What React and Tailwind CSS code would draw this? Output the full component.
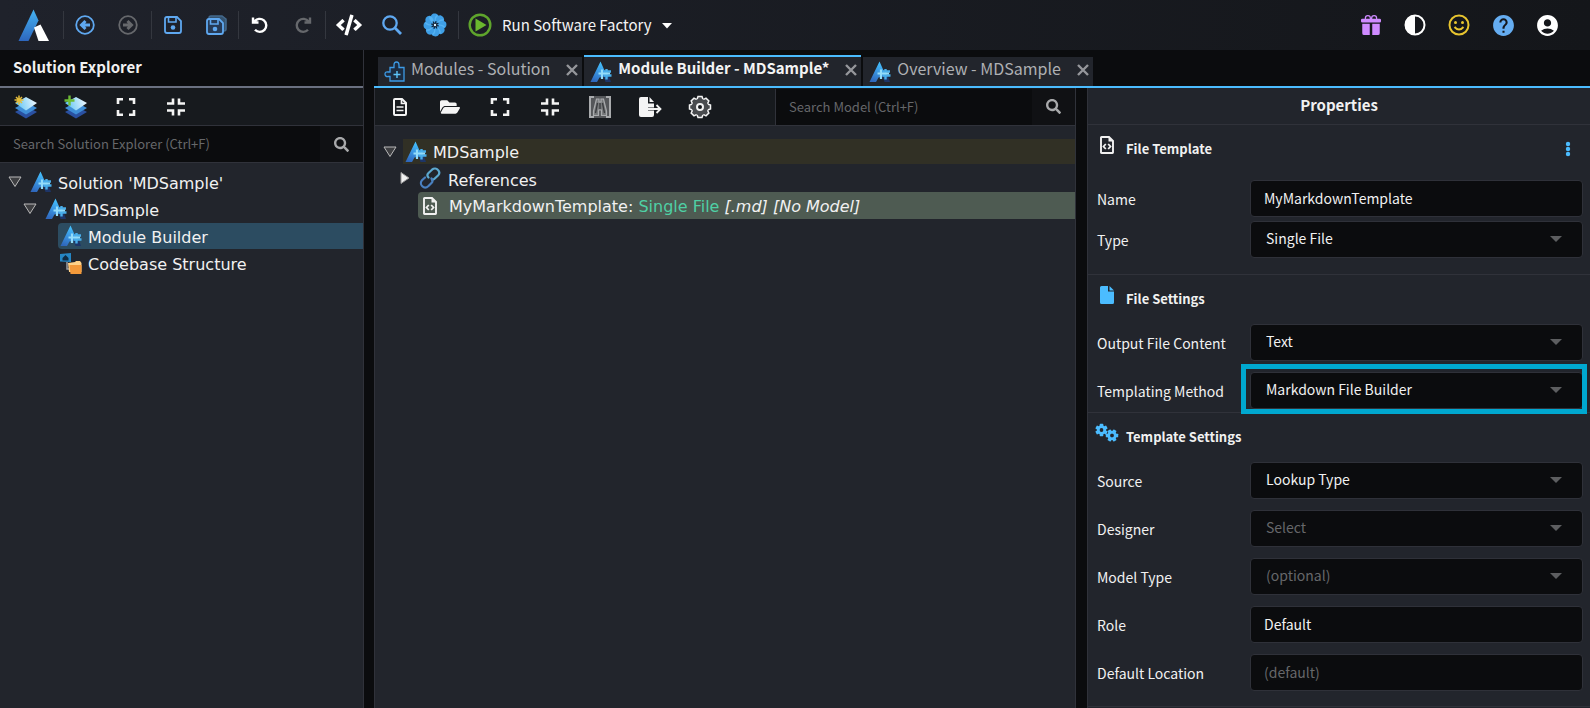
import { useId, useState } from "react";
import { BsGiftFill } from "react-icons/bs";
import { FaCode, FaFolderOpen, FaSearch } from "react-icons/fa";
import { MdAccountCircle, MdHelp } from "react-icons/md";

const LogoIcon = () => (
  <svg width="32" height="33" viewBox="0 0 32 33">
    <defs>
      <linearGradient id="logo" x1="0" y1="0" x2="0" y2="1">
        <stop offset="0" stopColor="#45b4f3" />
        <stop offset="1" stopColor="#2d66bd" />
      </linearGradient>
    </defs>
    <path d="M15.500 0.500L20.500 11.500L10.500 32H0.500Z" fill="url(#logo)" />
    <path d="M16 18.500L22.500 15.500L31 32H20.500Z" fill="#fff" />
  </svg>
);

const CircleArrowIcon = ({ flip, className }) => (
  <svg
    width="20"
    height="20"
    viewBox="0 0 20 20"
    fill="none"
    stroke="currentColor"
    className={className}
  >
    <circle cx="10" cy="10" r="8.800" strokeWidth="1.800" />
    <path
      d={flip ? "M5 10H13M9.500 6L13.500 10L9.500 14" : "M15 10H7M10.500 6L6.500 10L10.500 14"}
      strokeWidth="3"
    />
  </svg>
);

const SaveIcon = () => (
  <svg width="18" height="18" viewBox="0 0 18 18" fill="none" stroke="#5fa8f0">
    <path
      d="M3 1H13L17 5V15Q17 17 15 17H3Q1 17 1 15V3Q1 1 3 1Z"
      strokeWidth="1.800"
    />
    <path d="M4.500 1V6H12V1" strokeWidth="1.600" />
    <circle cx="9" cy="11.500" r="2.300" fill="#5fa8f0" stroke="none" />
  </svg>
);

const SaveAllIcon = () => (
  <svg width="21" height="20" viewBox="0 0 21 20" fill="none" stroke="#5fa8f0">
    <path
      d="M5 1H16L20 4V14Q20 16 18 16H5Q3 16 3 14V3Q3 1 5 1Z"
      fill="#35536f"
      stroke="#43698d"
      strokeWidth="1.500"
    />
    <path
      d="M3 4H13L17 8V17Q17 19 15 19H3Q1 19 1 17V6Q1 4 3 4Z"
      fill="#263a55"
      strokeWidth="1.800"
    />
    <path d="M4.500 4V9H12V4" strokeWidth="1.600" />
    <circle cx="9" cy="14" r="2.300" fill="#5fa8f0" stroke="none" />
  </svg>
);

const UndoIcon = ({ flip, className }) => (
  <svg
    width="18"
    height="18"
    viewBox="0 0 18 18"
    fill="none"
    stroke="currentColor"
    strokeWidth="2.400"
    className={className}
  >
    {flip ? (
      <path d="M14.500 5.500A6.500 6.500 0 1 0 14 13.800M16 1.500V6.500H10.500" />
    ) : (
      <path d="M3.500 5.500A6.500 6.500 0 1 1 4 13.800M2 1.500V6.500H7.500" />
    )}
  </svg>
);

const MagnifierIcon = () => (
  <svg width="20" height="20" viewBox="0 0 20 20" fill="none" stroke="#5fa8f0">
    <circle cx="8" cy="8" r="6.700" strokeWidth="2.300" />
    <path d="M12.800 12.800L19 19" strokeWidth="2.800" />
  </svg>
);

const FlowerIcon = () => (
  <svg width="24" height="24" viewBox="-12 -12 24 24">
    {[0, 45, 90, 135, 180, 225, 270, 315].map((angle) => (
      <g key={angle} transform={`rotate(${angle})`}>
        <path
          d="M0 -2C-5 -4 -5.500 -9 -2.500 -11C1 -12.500 5 -10 4 -5Z"
          fill="#3f9fe6"
        />
        <path d="M0 -2C-1 -6 0 -9 2 -10C4.500 -8 3.500 -5 0 -2Z" fill="#56b3f2" />
      </g>
    ))}
    {[0, 45, 90, 135].map((angle) => (
      <path
        key={angle}
        d="M0 -4V4"
        stroke="#132338"
        strokeWidth="1.200"
        transform={`rotate(${angle + 15})`}
      />
    ))}
    <circle r="1.200" fill="#d8f0ff" />
  </svg>
);

const PlayIcon = () => (
  <svg width="24" height="24" viewBox="0 0 24 24">
    <circle cx="12" cy="12" r="10.300" fill="none" stroke="#5fa52c" strokeWidth="2.400" />
    <path d="M7.500 5.500L18.500 12L7.500 18.500Z" fill="#6ab82e" />
  </svg>
);

const ContrastIcon = () => (
  <svg width="22" height="22" viewBox="0 0 22 22">
    <circle cx="11" cy="11" r="9.500" fill="none" stroke="#fff" strokeWidth="2" />
    <path d="M11 1A10 10 0 0 0 11 21Z" fill="#fff" />
  </svg>
);

const SmileIcon = () => (
  <svg width="22" height="22" viewBox="0 0 22 22" fill="none" stroke="#e8c52f">
    <circle cx="11" cy="11" r="9.500" strokeWidth="2" />
    <path d="M6.500 13Q11 18 15.500 13" strokeWidth="2" />
    <circle cx="7.500" cy="8.500" r="1.500" fill="#e8c52f" stroke="none" />
    <circle cx="14.500" cy="8.500" r="1.500" fill="#e8c52f" stroke="none" />
  </svg>
);

const LayersIcon = ({ badge }) => {
  const id = useId();

  return (
    <svg width="24" height="24" viewBox="0 0 24 24" className="shrink-0">
      <defs>
        <linearGradient id={id} x1="0" y1="0.500" x2="1" y2="0.300">
          <stop offset="0" stopColor="#5cc3f5" />
          <stop offset="1" stopColor="#f2faff" />
        </linearGradient>
      </defs>
      <path d="M1 17L12 11L23 17L12 23.500Z" fill="#2a50a0" />
      <path d="M1 13L12 7L23 13L12 19.500Z" fill="#3f8fd8" />
      <path d="M1 8L12 2L23 8L12 15.500Z" fill={`url(#${id})`} />
      {badge === "new" ? (
        <path
          d="M5 0.500V9.500M0.500 5H9.500M2 2L8 8M8 2L2 8"
          stroke="#e5bd3a"
          strokeWidth="1.500"
        />
      ) : (
        <path d="M5.500 0.500V10.500M0.500 5.500H10.500" stroke="#6dbb35" strokeWidth="2.400" />
      )}
    </svg>
  );
};

const ExpandIcon = () => (
  <svg width="20" height="20" viewBox="0 0 20 20" fill="none" stroke="#f4f4f4" strokeWidth="2.600">
    <path d="M2 7V2.300H7M13 2.300H18V7M18 13V17.700H13M7 17.700H2V13" />
  </svg>
);

const CollapseIcon = () => (
  <svg width="20" height="20" viewBox="0 0 20 20" fill="none" stroke="#f4f4f4" strokeWidth="2.600">
    <path d="M1 6.500H7V1.500M13 1.500V6.500H19M19 13.500H13V18.500M7 18.500V13.500H1" />
  </svg>
);

const FileTextIcon = () => (
  <svg width="16" height="20" viewBox="0 0 16 20" fill="none" stroke="#f4f4f4">
    <path
      d="M3 2H10L14 6V17Q14 18 13 18H3Q2 18 2 17V3Q2 2 3 2Z"
      strokeWidth="2"
    />
    <path d="M9.500 2V6.500H14M4.500 10H11.500M4.500 13.500H11.500" strokeWidth="1.700" />
  </svg>
);

const BinocularsIcon = () => (
  <svg width="24" height="24" viewBox="0 0 24 24" className="shrink-0">
    <rect x="1" y="1" width="22" height="22" fill="#55575a" />
    <path
      d="M6 2H2V22H6M18 2H22V22H18"
      stroke="#a9abad"
      strokeWidth="2"
      fill="none"
    />
    <path
      d="M8.500 4H11V7H13V4H15.500L18.500 16V20.500H13.500V15H10.500V20.500H5.500V16Z"
      stroke="#a9abad"
      strokeWidth="1.200"
      fill="#77797b"
    />
    <path d="M9.500 8L7.500 18M14.500 8L16.500 18M12 8V14" stroke="#3a3c3f" strokeWidth="1.300" />
  </svg>
);

const ExportIcon = () => (
  <svg width="26" height="22" viewBox="0 0 26 22" className="shrink-0">
    <path
      d="M4 1H11V7.500H17V11.500H11V14.500H17V19Q17 21 15 21H4Q2 21 2 19V3Q2 1 4 1Z"
      fill="#f4f4f4"
    />
    <path d="M12.500 1L17 6H12.500Z" fill="#f4f4f4" />
    <path d="M11 13H23M19.500 9L23.500 13L19.500 17" fill="none" stroke="#f4f4f4" strokeWidth="1.800" />
  </svg>
);

const GearIcon = () => (
  <svg width="24" height="24" viewBox="-12 -12 24 24" className="shrink-0">
    {[0, 45, 90, 135, 180, 225, 270, 315].map((angle) => (
      <path
        key={angle}
        d="M-3 -7.500L-2 -10.500H2L3 -7.500"
        fill="#4a4c4f"
        stroke="#f4f4f4"
        strokeWidth="1.500"
        transform={`rotate(${angle})`}
      />
    ))}
    <circle r="8" fill="#4a4c4f" />
    <circle r="3" fill="#16191c" stroke="#f4f4f4" strokeWidth="2" />
  </svg>
);

const PuzzleIcon = () => (
  <svg width="21" height="21" viewBox="0 0 21 21" fill="none" stroke="#3d9be6">
    <path
      d="M6 20V15.500H4.500Q1 16 1 13Q1 10.500 4 11H6V6.500H10V4Q10 1 12.500 1Q15 1 15 4V6.500H20V20Z"
      strokeWidth="1.300"
      fill="#1c2c41"
    />
    <path d="M13 10V17M9.500 13.500H16.500" stroke="#5cc4fa" strokeWidth="1.400" />
  </svg>
);

const ModuleIcon = () => {
  const id = useId();

  return (
    <svg width="22" height="22" viewBox="0 0 22 22" className="shrink-0">
      <defs>
        <linearGradient id={id} x1="0.600" y1="0" x2="0.300" y2="1">
          <stop offset="0" stopColor="#45c4ff" />
          <stop offset="0.500" stopColor="#3a96e2" />
          <stop offset="1" stopColor="#2f67bc" />
        </linearGradient>
      </defs>
      <path d="M13 14H18.500L21 21H15.500Z" fill="#1d3568" />
      <path d="M10.500 0.500L17 15L9.500 16.500L7 21H0.500Z" fill={`url(#${id})`} />
      <path
        d="M16.500 8V18.500M14 10.500H21M14 14.500H21.500"
        fill="none"
        stroke="#49aeea"
        strokeWidth="2.400"
      />
      <path
        d="M12 8.500V18M8.500 12.500H20"
        fill="none"
        stroke="#93dcfa"
        strokeWidth="2.200"
      />
    </svg>
  );
};

const CodebaseIcon = () => (
  <svg width="23" height="23" viewBox="0 0 23 23" className="shrink-0">
    <path d="M1 2L12 1V10L1 9.500Z" fill="#2586c4" />
    <path d="M3.500 6L6.500 3L9.500 6V8.500H3.500Z" fill="#102b42" />
    <path d="M8 10V17H11" stroke="#9a9da3" strokeWidth="1.500" fill="none" />
    <path d="M9 11L16 10L17 9H21L22.500 11V20H10Z" fill="#ffd188" />
    <path d="M10.500 13H22.500V21.500Q22.500 22 22 22H11.500Z" fill="#f3993a" />
  </svg>
);

const LinkIcon = () => (
  <svg
    width="22"
    height="22"
    viewBox="0 0 22 22"
    fill="none"
    strokeWidth="2.200"
    strokeLinecap="round"
    className="shrink-0"
  >
    <path
      d="M9.500 10.500C7.500 8.500 8.500 7 9.500 6L13 2.700C15 1 17.500 1.300 19 3C20.700 4.800 20.500 7 19 8.500L15.500 11.800C14.800 12.500 14 12.700 13 12.700"
      stroke="#5ca8cf"
    />
    <path
      d="M12.500 11.500C14 13.500 13.500 15 12.500 16L9.500 19C7.500 20.800 5 20.800 3.300 19.200C1.500 17.500 1.500 15 3 13.300L6 10.500"
      stroke="#4a80c0"
    />
  </svg>
);

const CodeFileIcon = () => (
  <svg width="16" height="20" viewBox="0 0 16 20" className="shrink-0">
    <path
      d="M2.500 2H10L14 6V17.500Q14 18 13.500 18H2.500Q2 18 2 17.500V2.500Q2 2 2.500 2Z"
      fill="none"
      stroke="#f1f1f1"
      strokeWidth="1.900"
    />
    <path d="M9.500 2V6.500H14Z" fill="#f1f1f1" />
    <path
      d="M6.800 9L4.500 11.500L6.800 14M9.200 9L11.500 11.500L9.200 14"
      fill="none"
      stroke="#f1f1f1"
      strokeWidth="1.800"
    />
  </svg>
);

const FileIcon = () => (
  <svg width="16" height="20" viewBox="0 0 16 20">
    <path
      d="M2.500 1H9V6.500H15V17.500Q15 19 13.500 19H2.500Q1 19 1 17.500V2.500Q1 1 2.500 1Z"
      fill="#4bbcff"
    />
    <path d="M10.500 1L15 5.500H10.500Z" fill="#4bbcff" />
  </svg>
);

const gearTeeth = [0, 60, 120, 180, 240, 300];

const CogsIcon = () => (
  <svg width="24" height="20" viewBox="0 0 24 20">
    <g transform="translate(6.500 7)">
      {gearTeeth.map((angle) => (
        <rect
          key={angle}
          x="-1.800"
          y="-6.200"
          width="3.600"
          height="4"
          rx="0.600"
          fill="#4bbcff"
          transform={`rotate(${angle})`}
        />
      ))}
      <circle r="3.300" fill="none" stroke="#4bbcff" strokeWidth="2.800" />
    </g>
    <g transform="translate(17 12.500)">
      {gearTeeth.map((angle) => (
        <rect
          key={angle}
          x="-1.800"
          y="-6.200"
          width="3.600"
          height="4"
          rx="0.600"
          fill="#4bbcff"
          transform={`rotate(${angle + 30})`}
        />
      ))}
      <circle r="3.300" fill="none" stroke="#4bbcff" strokeWidth="2.800" />
    </g>
  </svg>
);

const OpenArrow = () => (
  <svg width="14" height="12" viewBox="0 0 14 12" className="shrink-0">
    <path d="M1 1H13L7 10.500Z" fill="#3e3f42" stroke="#b9b9b9" />
  </svg>
);

const ClosedArrow = () => (
  <svg width="10" height="14" viewBox="0 0 10 14" className="shrink-0">
    <path d="M1 1.500L9 7L1 12.500Z" fill="#f1f1f1" stroke="#9a9a9a" />
  </svg>
);

const CloseIcon = () => (
  <svg width="12" height="12" viewBox="0 0 12 12" stroke="#95979b" strokeWidth="2.400">
    <path d="M1 1L11 11M11 1L1 11" />
  </svg>
);

const Divider = () => <div className="h-7 w-px bg-[#34373f]" />;

const IconButton = ({ label, className = "w-[22px]", children }) => (
  <button
    type="button"
    aria-label={label}
    className={`flex h-6 shrink-0 items-center justify-center ${className}`}
  >
    {children}
  </button>
);

const Header = () => (
  <header className="flex h-[50px] items-center justify-between bg-linear-to-r from-[#1f222b] to-[#14161a] pr-8 pl-[18px]">
    <div className="flex items-center">
      <LogoIcon />
      <div className="ml-[13px] flex items-center gap-[10px]">
        <Divider />
        <div className="flex gap-[21px] pr-[2px]">
          <IconButton label="Back">
            <CircleArrowIcon className="text-[#5fa8f0]" />
          </IconButton>
          <IconButton label="Forward">
            <CircleArrowIcon flip className="text-[#66686c]" />
          </IconButton>
        </div>
        <Divider />
        <div className="flex gap-[21px] pr-px">
          <IconButton label="Save">
            <SaveIcon />
          </IconButton>
          <IconButton label="Save all">
            <SaveAllIcon />
          </IconButton>
        </div>
        <Divider />
        <div className="flex gap-[21px] pr-px">
          <IconButton label="Undo">
            <UndoIcon className="text-white" />
          </IconButton>
          <IconButton label="Redo">
            <UndoIcon flip className="text-[#66686c]" />
          </IconButton>
        </div>
        <Divider />
        <div className="flex gap-[17px]">
          <IconButton label="Code" className="w-[26px]">
            <FaCode size={26} className="text-white" />
          </IconButton>
          <IconButton label="Search" className="w-[26px]">
            <MagnifierIcon />
          </IconButton>
          <IconButton label="Assistant" className="w-[26px]">
            <FlowerIcon />
          </IconButton>
        </div>
        <Divider />
      </div>
      <button
        type="button"
        className="ml-[9px] flex items-center gap-[10px] text-[15px] leading-6 text-[#f4f4f4]"
      >
        <PlayIcon />
        Run Software Factory
        <svg width="10" height="6" viewBox="0 0 10 6" className="mt-0.5">
          <path d="M0 0H10L5 5.500Z" fill="#fff" />
        </svg>
      </button>
    </div>
    <div className="flex items-center gap-[22px]">
      <IconButton label="What's new">
        <BsGiftFill size={20} className="text-[#cf8bff]" />
      </IconButton>
      <IconButton label="Theme">
        <ContrastIcon />
      </IconButton>
      <IconButton label="Feedback">
        <SmileIcon />
      </IconButton>
      <IconButton label="Help">
        <MdHelp size={25} className="shrink-0 text-[#65adf1]" />
      </IconButton>
      <IconButton label="Account">
        <MdAccountCircle size={25} className="shrink-0 text-white" />
      </IconButton>
    </div>
  </header>
);

const SearchBox = ({ id, placeholder }) => (
  <div className="flex h-9 min-w-0 flex-1 bg-[#0b0c0e]">
    <input
      id={id}
      type="search"
      aria-label={placeholder}
      placeholder={placeholder}
      className="min-w-0 flex-1 bg-transparent px-[13px] text-[13px] text-white outline-none placeholder:text-[#66676a]"
    />
    <button
      type="button"
      aria-label="Search"
      className="flex w-[43px] items-center justify-center bg-[#101114]"
    >
      <FaSearch size={15} className="text-[#a8a9ab]" />
    </button>
  </div>
);

const SolutionExplorer = () => (
  <aside className="flex w-[364px] shrink-0 flex-col border-r border-[#30323a] bg-[#22252c]">
    <h2 className="h-[38px] border-b-2 border-[#6a7080] bg-[#0b0c0e] pl-[13px] text-[15px] leading-[34px] font-bold text-[#f1f1f1]">
      Solution Explorer
    </h2>
    <div className="flex h-[38px] items-center gap-[28px] border-b border-[#30323a] bg-[#171a1e] pl-[15px]">
      <IconButton label="New solution">
        <LayersIcon badge="new" />
      </IconButton>
      <IconButton label="Add application">
        <LayersIcon badge="add" />
      </IconButton>
      <IconButton label="Expand all">
        <ExpandIcon />
      </IconButton>
      <IconButton label="Collapse all">
        <CollapseIcon />
      </IconButton>
    </div>
    <div className="flex border-b border-[#30323a]">
      <SearchBox id="solution-search" placeholder="Search Solution Explorer (Ctrl+F)" />
    </div>
    <ul className="mt-[6px] flex flex-col gap-px font-['DejaVu_Sans',sans-serif] text-[16px] text-[#f1f1f1]">
      <li className="flex h-[26px] items-center pl-2">
        <OpenArrow />
        <span className="ml-2 flex items-center gap-[6px]">
          <ModuleIcon />
          <span className="pt-[3px]">Solution 'MDSample'</span>
        </span>
      </li>
      <li className="flex h-[26px] items-center pl-[23px]">
        <OpenArrow />
        <span className="ml-2 flex items-center gap-[6px]">
          <ModuleIcon />
          <span className="pt-[3px]">MDSample</span>
        </span>
      </li>
      <li className="ml-[58px] flex h-[26px] items-center gap-[6px] rounded-l bg-[#2c4c61] pl-[2px]">
        <ModuleIcon />
        <span className="pt-[3px]">Module Builder</span>
      </li>
      <li className="ml-[58px] flex h-[26px] items-center gap-[6px] pl-px">
        <CodebaseIcon />
        <span className="pt-[3px]">Codebase Structure</span>
      </li>
    </ul>
  </aside>
);

const Tab = ({ icon, title, active }) => (
  <div
    className={
      active
        ? "flex h-[31px] items-center gap-[6px] border-t-2 border-[#4bbcff] bg-[#22252c] pr-1 pl-[6px] text-[15px] font-bold text-[#f4f4f4]"
        : "flex h-[29px] items-center gap-[6px] bg-[#22252c] pr-1 pl-[6px] text-[16px] text-[#aeb0b3]"
    }
  >
    {icon}
    <button type="button" className="pb-2 leading-5">
      {title}
    </button>
    <button type="button" aria-label={`Close ${title}`} className="ml-[10px] pb-1">
      <CloseIcon />
    </button>
  </div>
);

const Designer = () => (
  <main className="flex min-w-0 flex-1 flex-col border-x border-[#30323a] bg-[#22252c]">
    <div className="flex h-[38px] items-center border-b border-[#30323a] bg-[#171a1e]">
      <div className="flex items-center gap-[28px] pl-[14px]">
        <IconButton label="New">
          <FileTextIcon />
        </IconButton>
        <IconButton label="Open">
          <FaFolderOpen size={20} className="text-[#f4f4f4]" />
        </IconButton>
        <IconButton label="Expand all">
          <ExpandIcon />
        </IconButton>
        <IconButton label="Collapse all">
          <CollapseIcon />
        </IconButton>
        <IconButton label="Find">
          <BinocularsIcon />
        </IconButton>
        <IconButton label="Export">
          <ExportIcon />
        </IconButton>
        <IconButton label="Settings">
          <GearIcon />
        </IconButton>
      </div>
      <div className="ml-auto flex w-[300px] border-l border-[#30323a]">
        <SearchBox id="model-search" placeholder="Search Model (Ctrl+F)" />
      </div>
    </div>
    <ul className="mt-[13px] font-['DejaVu_Sans',sans-serif] text-[16px] text-[#f1f1f1]">
      <li className="flex h-[25px] items-center pl-2">
        <OpenArrow />
        <span className="ml-[6px] flex h-full flex-1 items-center gap-[6px] bg-[#313025] pl-[2px]">
          <ModuleIcon />
          <span className="pt-[2px]">MDSample</span>
        </span>
      </li>
      <li className="flex h-7 items-center pl-[25px]">
        <ClosedArrow />
        <span className="ml-[9px] flex items-center gap-[7px]">
          <LinkIcon />
          <span className="pt-[5px]">References</span>
        </span>
      </li>
      <li className="ml-[43px] flex h-[27px] items-center rounded-l bg-[#4e5b52] pl-[4px]">
        <CodeFileIcon />
        <span className="ml-[11px] pt-[3px] whitespace-pre">
          MyMarkdownTemplate: <span className="text-[#4fd0a5]">Single File</span>{" "}
          <em>[.md] [No Model]</em>
        </span>
      </li>
    </ul>
  </main>
);

const TextField = ({ id, label, value = "", placeholder }) => {
  const [text, setText] = useState(value);

  return (
    <div className="flex items-center">
      <label htmlFor={id} className="w-[153px] shrink-0">
        {label}
      </label>
      <input
        id={id}
        type="text"
        value={text}
        placeholder={placeholder}
        onChange={(e) => setText(e.target.value)}
        className="h-[37px] min-w-0 flex-1 rounded border border-[#2f3139] bg-[#0b0c0e] px-[13px] pb-px outline-none placeholder:text-[#66676a]"
      />
    </div>
  );
};

const SelectField = ({ id, label, value, muted, highlighted }) => (
  <div className="flex items-center">
    <label htmlFor={id} className="w-[153px] shrink-0">
      {label}
    </label>
    <div className="relative min-w-0 flex-1">
      <select
        id={id}
        className={`block h-[37px] w-full appearance-none rounded border border-[#2f3139] bg-[#0b0c0e] px-[15px] pb-[3px] outline-none ${
          muted ? "text-[#66676a]" : ""
        }`}
      >
        <option>{value}</option>
      </select>
      <svg
        width="12"
        height="6"
        viewBox="0 0 12 6"
        className="pointer-events-none absolute top-[15px] right-[21px]"
      >
        <path d="M0 0H12L6 6Z" fill="#5d5e60" />
      </svg>
      {highlighted && (
        <div className="pointer-events-none absolute -top-2 -right-1 -bottom-[5px] -left-[9px] border-[5px] border-[#00a8d0]" />
      )}
    </div>
  </div>
);

const SectionTitle = ({ icon, title, children }) => (
  <div className="flex h-6 items-center">
    <span className="-ml-0.5 flex h-full w-[31px] items-start">{icon}</span>
    <h3 className="pt-[3px] text-[13px] font-bold">{title}</h3>
    {children}
  </div>
);

const Properties = () => (
  <aside className="w-[503px] shrink-0 border-l border-[#30323a] bg-[#22252c] text-[14px] leading-5 text-[#f1f1f1]">
    <h2 className="h-[37px] border-b border-[#30323a] text-center text-[15px] leading-[33px] font-bold">
      Properties
    </h2>
    <section className="border-b border-[#30323a] pt-[10px] pr-[7px] pb-4 pl-[9px]">
      <SectionTitle
        icon={
          <span className="pl-[4px]">
            <CodeFileIcon />
          </span>
        }
        title="File Template"
      >
        <button type="button" aria-label="More" className="mr-[12px] ml-auto pt-1">
          <svg width="6" height="16" viewBox="0 0 6 16" fill="#4bbcff">
            <circle cx="3" cy="3" r="2.200" />
            <circle cx="3" cy="8" r="2.200" />
            <circle cx="3" cy="13" r="2.200" />
          </svg>
        </button>
      </SectionTitle>
      <div className="mt-[21px] flex flex-col gap-1">
        <TextField id="name" label="Name" value="MyMarkdownTemplate" />
        <SelectField id="type" label="Type" value="Single File" />
      </div>
    </section>
    <section className="border-b border-[#30323a] pt-[10px] pr-[7px] pb-[3px] pl-[9px]">
      <SectionTitle
        icon={
          <span className="pl-[4px]">
            <FileIcon />
          </span>
        }
        title="File Settings"
      />
      <div className="mt-[15px] flex flex-col gap-[11px]">
        <SelectField id="output" label="Output File Content" value="Text" />
        <SelectField
          id="method"
          label="Templating Method"
          value="Markdown File Builder"
          highlighted
        />
      </div>
    </section>
    <section className="border-b border-[#30323a] pt-[10px] pr-[7px] pb-[15px] pl-[9px]">
      <SectionTitle icon={<CogsIcon />} title="Template Settings" />
      <div className="mt-[15px] flex flex-col gap-[11px]">
        <SelectField id="source" label="Source" value="Lookup Type" />
        <SelectField id="designer" label="Designer" value="Select" muted />
        <SelectField id="model" label="Model Type" value="(optional)" muted />
        <TextField id="role" label="Role" value="Default" />
        <TextField id="location" label="Default Location" placeholder="(default)" />
      </div>
    </section>
  </aside>
);

const App = () => {
  return (
    <div className="flex min-h-screen flex-col bg-[#0b0c0e] font-['Noto_Sans_CJK_SC',sans-serif]">
      <Header />
      <div className="flex flex-1">
        <SolutionExplorer />
        <div className="ml-[10px] flex min-w-0 flex-1 flex-col">
          <nav className="flex h-[38px] items-end gap-[2px] border-b-2 border-[#4bbcff] pl-1">
            <Tab icon={<PuzzleIcon />} title="Modules - Solution" />
            <Tab icon={<ModuleIcon />} title="Module Builder - MDSample*" active />
            <Tab icon={<ModuleIcon />} title="Overview - MDSample" />
          </nav>
          <div className="flex flex-1 gap-[11px]">
            <Designer />
            <Properties />
          </div>
        </div>
      </div>
    </div>
  );
};

export default App;
